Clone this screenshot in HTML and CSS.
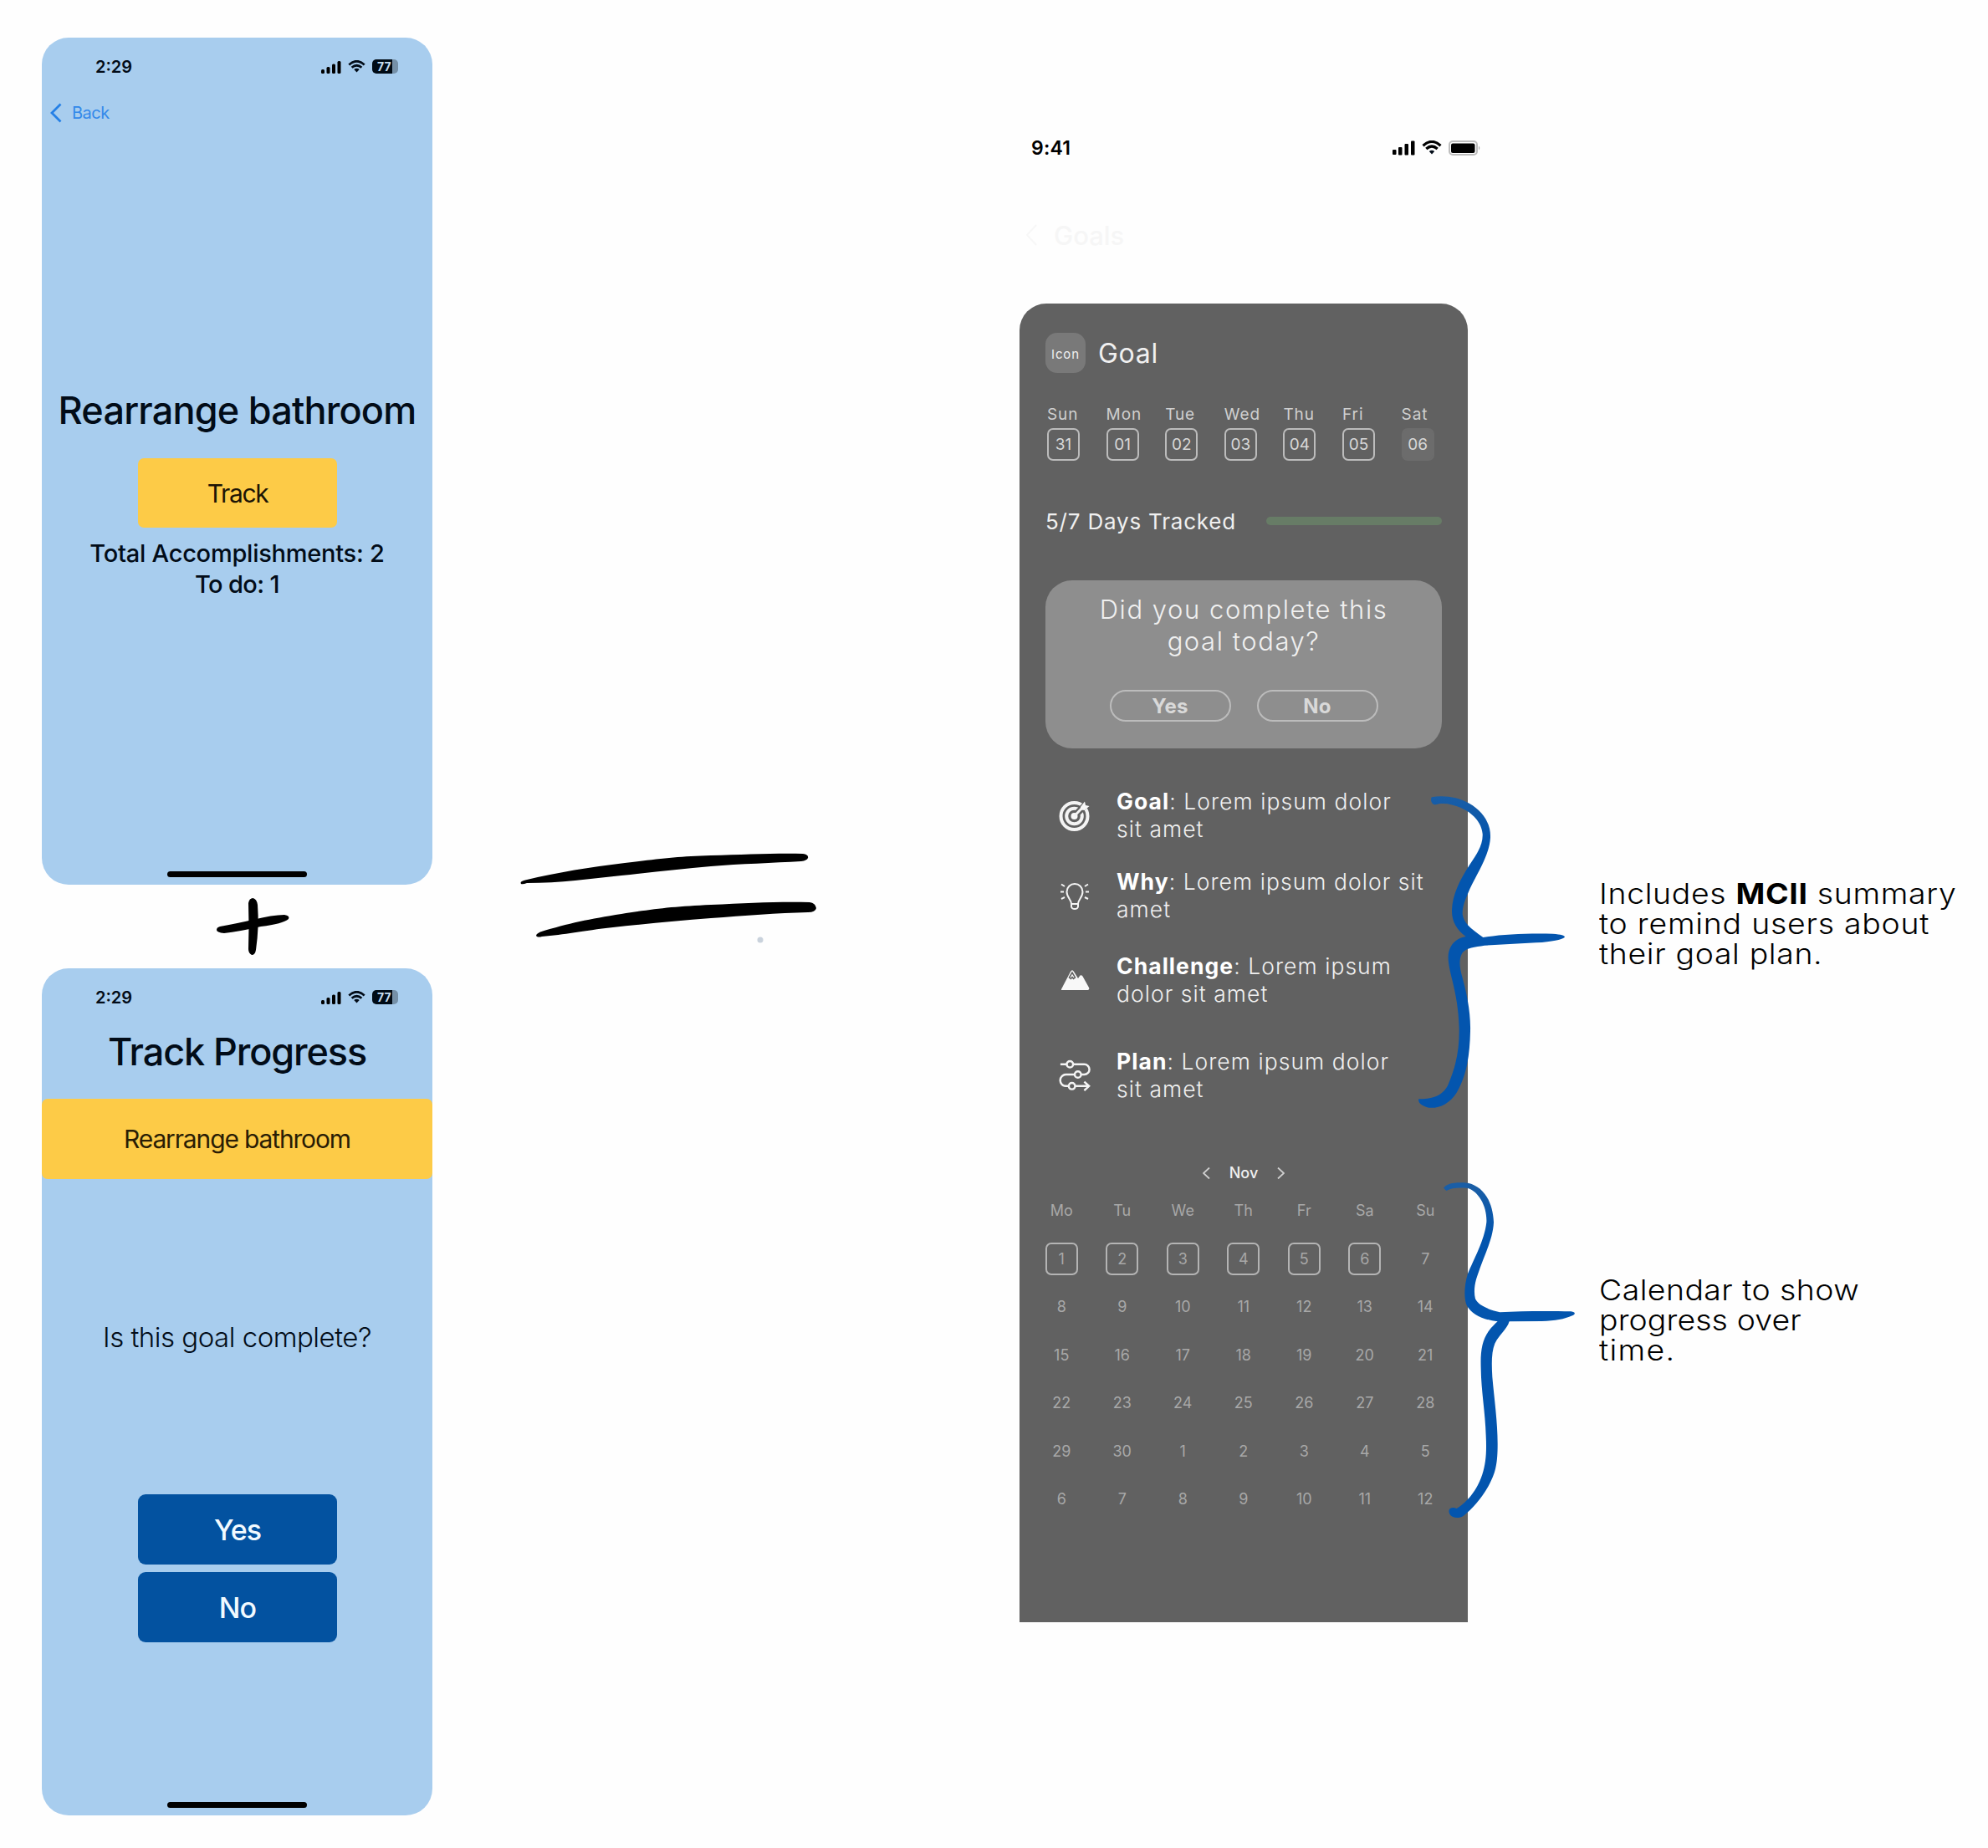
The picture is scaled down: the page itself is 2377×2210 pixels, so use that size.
FILE: index.html
```html
<!DOCTYPE html>
<html lang="en">
<head>
  <meta charset="UTF-8" />
  <meta name="viewport" content="width=device-width, initial-scale=1.0" />
  <title>Goal Tracking</title>
  <link rel="stylesheet" href="styles.css">
</head>
<body>

  <div class="phones">
    <div class="phone">
      <div class="status">
        <span class="time">2:29</span>
        <div class="status-icons">
          <svg class="signal" viewBox="0 0 24 16"><rect x="0" y="11" width="4" height="5" rx="1.5"/><rect x="6.5" y="8" width="4" height="8" rx="1.5"/><rect x="13" y="4.500" width="4" height="11.500" rx="1.5"/><rect x="19.500" y="1" width="4" height="15" rx="1.5"/></svg>
          <svg class="wifi" viewBox="0 0 24 17"><path d="M1.500 6.200Q12-3.400 22.500 6.200M5.300 10Q12 4 18.700 10"/><path class="solid" d="M8.300 12.500Q12 9.600 15.700 12.500L12 16.500Z"/></svg>
          <span class="battery-77"><span>77</span></span>
        </div>
      </div>
      <div class="back">
        <svg viewBox="0 0 14 24"><path d="M12.500 1.500 2 12l10.500 10.500"/></svg>
        <span>Back</span>
      </div>
      <h1 class="title rearrange">Rearrange bathroom</h1>
      <div class="track-btn">Track</div>
      <div class="totals">Total Accomplishments: 2<br><span class="todo">To do: 1</span></div>
      <div class="home-bar"></div>
    </div>

    <svg class="plus" viewBox="0 0 467 100">
      <path d="M247 22Q248 16 252.500 16Q257 17 258 24Q260 50 256 78Q255 84 251 84Q247 82 247 77Q248 50 247 22Z"/>
      <path d="M213 50Q235 46 252 42Q276 36 290 36Q297 37 295 41Q288 47 262 50Q236 56 218 58Q209 57 209 54Q209 51 213 50Z"/>
    </svg>

    <div class="phone">
      <div class="status">
        <span class="time">2:29</span>
        <div class="status-icons">
          <svg class="signal" viewBox="0 0 24 16"><rect x="0" y="11" width="4" height="5" rx="1.5"/><rect x="6.5" y="8" width="4" height="8" rx="1.5"/><rect x="13" y="4.500" width="4" height="11.500" rx="1.5"/><rect x="19.500" y="1" width="4" height="15" rx="1.5"/></svg>
          <svg class="wifi" viewBox="0 0 24 17"><path d="M1.500 6.200Q12-3.400 22.500 6.200M5.300 10Q12 4 18.700 10"/><path class="solid" d="M8.300 12.500Q12 9.600 15.700 12.500L12 16.500Z"/></svg>
          <span class="battery-77"><span>77</span></span>
        </div>
      </div>
      <h1 class="title progress-title">Track Progress</h1>
      <div class="band">Rearrange bathroom</div>
      <div class="question">Is this goal complete?</div>
      <div class="answers">
        <div class="answer">Yes</div>
        <div class="answer">No</div>
      </div>
      <div class="home-bar"></div>
    </div>
  </div>

  <svg class="equals" viewBox="0 0 360 110">
    <path d="M3 42Q1 39 8 37.500C48 28 85 22 127 17S190 9 230 8S310 5 340 6Q347 7 346 11Q345 14 338 15C305 17 265 18 230 21S160 28 123 32S50 41 10 41Q5 43 3 42Z"/>
    <path d="M22 105Q19 103 26 99.500C60 89 85 84 123 78S185 69 230 67S310 63 348 64Q355 65 356 71Q355 76 346 76C310 77 270 80 230 83S150 90 113 94S55 103 28 105Q24 106 22 105Z"/>
    <circle class="dot" cx="289" cy="109" r="3.500"/>
  </svg>

  <div class="mock">
    <div class="mock-status">
      <span class="mock-time">9:41</span>
      <div class="status-icons">
        <svg class="signal big" viewBox="0 0 27 18"><rect x="0" y="11" width="4.500" height="6" rx="1"/><rect x="7" y="8" width="4.500" height="9.500" rx="1"/><rect x="14.500" y="4" width="4.500" height="13.500" rx="1"/><rect x="22" y="0.500" width="4.500" height="17" rx="1"/></svg>
        <svg class="wifi big" viewBox="0 0 24 17"><path d="M1.500 6.200Q12-3.400 22.500 6.200M5.300 10Q12 4 18.700 10"/><path class="solid" d="M8.800 13Q12 10.400 15.200 13L12 16.500Z"/></svg>
        <svg class="battery-full" viewBox="0 0 39 18"><rect class="case" x="1" y="1" width="33" height="16" rx="4"/><rect x="3" y="3.500" width="28.500" height="11.500" rx="2"/><path class="nub" d="M36 6.500Q38.500 9 36 11.500Z"/></svg>
      </div>
    </div>
    <div class="mock-back">
      <svg viewBox="0 0 16 28"><path d="M14 2 3 14l11 12"/></svg>
      <span>Goals</span>
    </div>

    <div class="panel">
      <div class="goal-head">
        <span class="icon-box">Icon</span>
        <span class="goal-name">Goal</span>
      </div>

      <div class="week">
        <div class="day"><span>Sun</span><b>31</b></div>
        <div class="day"><span>Mon</span><b>01</b></div>
        <div class="day"><span>Tue</span><b>02</b></div>
        <div class="day"><span>Wed</span><b>03</b></div>
        <div class="day"><span>Thu</span><b>04</b></div>
        <div class="day"><span>Fri</span><b>05</b></div>
        <div class="day today"><span>Sat</span><b>06</b></div>
      </div>

      <div class="tracked">
        <span>5/7 Days Tracked</span>
        <div class="bar"></div>
      </div>

      <div class="card">
        <p>Did you complete this<br>goal today?</p>
        <div class="card-buttons">
          <span>Yes</span>
          <span>No</span>
        </div>
      </div>

      <div class="summary">
        <div class="item goal">
          <svg viewBox="0 0 38 38"><circle cx="18.500" cy="20" r="16"/><circle cx="18.500" cy="20" r="9.300"/><path class="gap" d="M22 16.500 35 3.500"/><circle class="solid" cx="18.500" cy="20" r="4"/><path class="shaft" d="M18.500 20 29 9"/><path class="solid" d="M26 9 31 2.500 32 7l4.500 1L31 13l-5-.5Z"/></svg>
          <p><strong>Goal</strong>: Lorem ipsum dolor<br>sit amet</p>
        </div>
        <div class="item why">
          <svg viewBox="0 0 38 38"><path class="thin" d="M15 29C15 24 9.500 21 9.500 14.500a9.500 9.500 0 0 1 19 0C28.500 21 23 24 23 29v3a4 3 0 0 1-8 0ZM15 29h8M2 14.500h4M32 14.500h4M3 5.500l4 2.500M35 5.500 31 8M3 23l4-2M35 23l-4-2"/></svg>
          <p><strong>Why</strong>: Lorem ipsum dolor sit<br>amet</p>
        </div>
        <div class="item challenge">
          <svg viewBox="0 0 38 38"><path class="solid" d="M3 30 14 9Q16 5.500 18 9l5 8 2.500-3.500q1.500-1 3 1L36 28q1 2-1 3H4q-1.500 0-1-1Z"/><path class="notch" d="m12.500 16 3.500-6 3.500 6-2 1.500-1.500-2-1.500 2Z"/></svg>
          <p><strong>Challenge</strong>: Lorem ipsum<br>dolor sit amet</p>
        </div>
        <div class="item plan">
          <svg viewBox="0 0 38 40"><path class="mid" d="M1 6h8M17 6h14a6.500 6.500 0 0 1 0 13h-4M19 19H8a7 7 0 0 0 0 14.500h3M20 33.500h16M31 28l6 5.500-6 5.500"/><circle class="mid" cx="13" cy="6" r="4"/><circle class="mid" cx="23" cy="19" r="4"/><circle class="mid" cx="15.500" cy="33.500" r="4"/></svg>
          <p><strong>Plan</strong>: Lorem ipsum dolor<br>sit amet</p>
        </div>
      </div>

      <div class="month">
        <svg viewBox="0 0 9 14"><path d="M8 .5 1 7l7 6.500"/></svg>
        <span>Nov</span>
        <svg viewBox="0 0 9 14"><path d="m1 .5 7 6.500-7 6.500"/></svg>
      </div>
      <div class="weekdays">
        <span>Mo</span><span>Tu</span><span>We</span><span>Th</span><span>Fr</span><span>Sa</span><span>Su</span>
      </div>
      <div class="dates">
        <span class="on">1</span><span class="on">2</span><span class="on">3</span><span class="on">4</span><span class="on">5</span><span class="on">6</span><span>7</span>
        <span>8</span><span>9</span><span>10</span><span>11</span><span>12</span><span>13</span><span>14</span>
        <span>15</span><span>16</span><span>17</span><span>18</span><span>19</span><span>20</span><span>21</span>
        <span>22</span><span>23</span><span>24</span><span>25</span><span>26</span><span>27</span><span>28</span>
        <span>29</span><span>30</span><span>1</span><span>2</span><span>3</span><span>4</span><span>5</span>
        <span>6</span><span>7</span><span>8</span><span>9</span><span>10</span><span>11</span><span>12</span>
      </div>
    </div>

    <!-- hand drawn braces over the panel edge -->
    <svg class="brace brace-summary" viewBox="0 0 750 1290">
      <linearGradient id="ink" x1="0" y1="90" x2="0" y2="260" gradientUnits="userSpaceOnUse"><stop offset="0" stop-color="#1a5ea6"/><stop offset="1" stop-color="#0355ae"/></linearGradient>
      <path d="M125 100C170 92 220 100 260 122C310 150 338 195 336 245C332 310 290 370 262 430C245 470 236 490 236 520C240 550 262 570 310 603C380 592 460 588 560 590C590 592 603 596 603 602C590 612 560 618 500 622L315 632C280 638 250 640 236 658C222 680 225 710 235 745C250 800 266 870 264 940C262 1030 250 1100 215 1160C190 1200 150 1218 115 1214C90 1208 75 1195 79 1183C120 1183 165 1175 185 1130C215 1060 225 1000 224 930C222 860 212 810 200 760C185 700 180 670 190 645C200 620 220 605 248 600C215 575 197 545 198 505C200 450 225 400 260 345C290 300 310 270 308 232C305 190 270 155 230 138C200 125 165 118 140 127C125 127 120 110 125 100Z"/>
    </svg>
    <svg class="brace brace-calendar" viewBox="0 0 750 1290">
      <path d="M168 92C180 75 210 70 255 74C310 85 345 140 348 215C345 280 310 340 285 420C278 445 277 470 282 490C295 515 330 528 370 538C450 533 550 533 625 535C642 537 642 545 630 550C600 563 570 569 520 570L404 571C395 600 370 615 352 650C340 680 340 720 343 770C350 850 362 930 362 1010C362 1080 355 1110 335 1150C310 1200 275 1240 240 1268C225 1278 200 1278 190 1262C180 1240 200 1235 215 1242C250 1222 290 1175 307 1120C320 1080 323 1040 320 980C318 900 303 820 302 740C300 680 305 640 330 605C342 590 352 580 362 571C310 565 270 545 252 515C240 490 242 440 255 400C275 350 315 280 322 215C325 160 295 105 255 93C225 90 195 92 178 102Z"/>
    </svg>
  </div>

  <div class="notes">
    <p><span class="n1">Includes <strong>MCII</strong> summary</span><br><span class="n2">to remind users about</span><br><span class="n3">their goal plan.</span></p>
    <p><span class="n4">Calendar to show</span><br><span class="n5">progress over</span><br><span class="n6">time.</span></p>
  </div>

</body>
</html>
```
FILE: styles.css
```css
* {
  box-sizing: border-box;
}

body {
  margin: 0;
  width: 2377px;
  height: 2210px;
  overflow: hidden;
  background-color: #fefefe;
  color: #000;
  font-family: Inter, "Liberation Sans", sans-serif;
  display: flex;
  align-items: flex-start;
  padding-left: 50px;
}

p, h1 {
  margin: 0;
}

/* phones */

.phones {
  width: 467px;
  margin-top: 45px;
}

.phone {
  height: 1013px;
  background-color: #a8cdee;
  border-radius: 32px;
  color: #020c18;
  display: flex;
  flex-direction: column;
  align-items: center;
}

.status {
  width: 100%;
  height: 69px;
  padding: 0 41px 0 64px;
  display: flex;
  align-items: center;
  justify-content: space-between;
}

.time {
  font-size: 20px;
  font-weight: 600;
}

.status-icons {
  display: flex;
  align-items: center;
  gap: 8px;
}

.signal {
  width: 24px;
  height: 16px;
}

.wifi {
  width: 21px;
  height: 15px;
  fill: none;
  stroke: #020c18;
  stroke-width: 3.2;
}

.wifi .solid {
  fill: #020c18;
  stroke: none;
}

.battery-77 {
  width: 31px;
  height: 17px;
  border-radius: 5px;
  background: linear-gradient(90deg, #000b16 77%, #7590a8 77%);
  color: #c4dcf0;
  font-size: 14px;
  font-weight: 700;
  line-height: 17px;
  padding-left: 6px;
}

.back {
  width: 100%;
  height: 41px;
  padding-left: 10px;
  display: flex;
  align-items: center;
  gap: 12px;
  color: #3389ea;
  font-size: 20px;
  letter-spacing: -0.5px;
}

.back svg {
  width: 14px;
  height: 24px;
  fill: none;
  stroke: #2580e6;
  stroke-width: 2.8;
}

.title {
  font-size: 45px;
  font-weight: 500;
  line-height: 56px;
  white-space: nowrap;
}

.rearrange {
  margin-top: 308px;
  letter-spacing: -0.8px;
}

.track-btn {
  width: 238px;
  height: 83px;
  margin: 29px 0 0 1px;
  border-radius: 7px;
  background-color: #fdcb47;
  color: #1c1405;
  font-size: 30px;
  line-height: 84px;
  text-align: center;
  letter-spacing: -1.4px;
}

.totals {
  margin-top: 12px;
  font-size: 29px;
  font-weight: 500;
  line-height: 37px;
  text-align: center;
  letter-spacing: -0.25px;
}

.todo {
  letter-spacing: -0.6px;
}

.home-bar {
  width: 167px;
  height: 7px;
  margin: auto 0 9px;
  border-radius: 4px;
  background-color: #000;
}

.plus {
  display: block;
  width: 467px;
  height: 100px;
}

.progress-title {
  margin-top: 3px;
  letter-spacing: -1.1px;
}

.band {
  width: 100%;
  height: 96px;
  margin-top: 28px;
  border-radius: 7px;
  background-color: #fdcb47;
  color: #2a1d05;
  font-size: 30px;
  line-height: 96px;
  text-align: center;
  letter-spacing: -1.15px;
}

.question {
  margin-top: 169px;
  font-size: 33px;
  font-weight: 300;
  line-height: 40px;
  letter-spacing: -0.5px;
}

.answers {
  margin: 168px 0 0 1px;
  display: flex;
  flex-direction: column;
  gap: 9px;
}

.answer {
  width: 238px;
  height: 84px;
  border-radius: 9px;
  background-color: #0352a0;
  color: #f2faff;
  font-size: 34px;
  font-weight: 500;
  line-height: 85px;
  text-align: center;
  letter-spacing: -1px;
}

/* equals sign */

.equals {
  width: 360px;
  height: 110px;
  margin: 1015px 0 0 103px;
  overflow: visible;
}

.equals .dot {
  fill: #c9d2dc;
}

/* goal mock */

.mock {
  position: relative;
  width: 552px;
  margin: 156px 0 0 239px;
}

.mock-status {
  height: 41px;
  padding-left: 14px;
  display: flex;
  align-items: center;
  justify-content: space-between;
}

.mock-time {
  font-size: 23px;
  font-weight: 600;
  letter-spacing: 0.2px;
}

.signal.big {
  width: 27px;
  height: 18px;
}

.wifi.big {
  width: 24px;
  height: 17px;
  stroke: #000;
}

.battery-full {
  width: 39px;
  height: 18px;
}

.battery-full .case {
  fill: none;
  stroke: #bdbdbd;
  stroke-width: 2;
}

.battery-full .nub {
  fill: #aaa;
}

.mock-back {
  height: 40px;
  margin: 64px 0 62px;
  padding-left: 6px;
  display: flex;
  align-items: center;
  gap: 19px;
  color: #f6f6f6;
  font-size: 31px;
  font-weight: 500;
}

.mock-back svg {
  width: 16px;
  height: 28px;
  fill: none;
  stroke: #f7f7f7;
  stroke-width: 2;
}

.panel {
  width: 536px;
  height: 1577px;
  padding: 35px 31px 0;
  border-radius: 32px 32px 0 0;
  background-color: #616161;
  color: #f0f0f0;
}

.goal-head {
  display: flex;
  align-items: center;
  gap: 15px;
}

.icon-box {
  width: 48px;
  height: 48px;
  border-radius: 14px;
  background-color: #797979;
  font-size: 15px;
  line-height: 51px;
  text-align: center;
  letter-spacing: 0.9px;
}

.goal-name {
  font-size: 32px;
  letter-spacing: 0.7px;
}

.week {
  display: grid;
  grid-template-columns: repeat(7, 70.6px);
  margin: 40px 0 0 2px;
}

.day span {
  display: block;
  font-size: 19px;
  line-height: 20px;
  letter-spacing: 0.9px;
  color: #cfcfcf;
}

.day b {
  display: block;
  width: 39px;
  height: 39px;
  margin-top: 6px;
  border: 2px solid #bcbcbc;
  border-radius: 7px;
  font-size: 19px;
  font-weight: 400;
  line-height: 36px;
  text-align: center;
  color: #d8d8d8;
}

.day.today b {
  border-color: #6c6c6c;
  background-color: #6c6c6c;
}

.tracked {
  display: flex;
  align-items: center;
  justify-content: space-between;
  margin-top: 57px;
  font-size: 26px;
  line-height: 32px;
  letter-spacing: 0.8px;
}

.bar {
  width: 210px;
  height: 10px;
  margin-bottom: 2px;
  border-radius: 5px;
  background-color: #677c66;
}

.card {
  height: 201px;
  margin-top: 54px;
  padding-top: 16px;
  border-radius: 32px;
  background-color: #8e8e8e;
  font-size: 31px;
  font-weight: 350;
  line-height: 37.5px;
  text-align: center;
  letter-spacing: 1.55px;
}

.card-buttons {
  display: flex;
  justify-content: center;
  gap: 31px;
  margin-top: 40px;
}

.card-buttons span {
  width: 145px;
  height: 38px;
  border: 2px solid #bcbcbc;
  border-radius: 19px;
  color: #d9d9d9;
  font-size: 24px;
  font-weight: 700;
  line-height: 36px;
  letter-spacing: 0.3px;
}

.summary {
  margin-top: 47px;
  font-size: 26.5px;
  font-weight: 350;
  line-height: 33px;
  letter-spacing: 1.05px;
}

.item {
  display: grid;
  grid-template-columns: 69px 1fr;
  align-items: center;
  padding-left: 16px;
  white-space: nowrap;
}

.item strong {
  font-weight: 700;
  color: #fff;
}

.item svg {
  width: 38px;
  height: 38px;
  fill: none;
  stroke: #f4f4f4;
  stroke-width: 4;
}

.item .thin {
  stroke-width: 2;
}

.item .mid {
  stroke-width: 2.6;
}

.item .solid {
  fill: #f8f8f8;
  stroke: none;
}

.item .gap {
  stroke: #616161;
  stroke-width: 8;
}

.item .shaft {
  stroke-width: 3;
}

.item .notch {
  fill: none;
  stroke: #616161;
  stroke-width: 1.5;
}

.why {
  margin-top: 29.5px;
}

.challenge {
  margin-top: 35.5px;
}

.plan {
  margin-top: 47.5px;
}

.month {
  display: flex;
  align-items: center;
  justify-content: center;
  gap: 23px;
  margin-top: 74px;
  font-size: 18px;
  font-weight: 500;
  line-height: 20px;
}

.month svg {
  width: 9px;
  height: 14px;
  fill: none;
  stroke: #d0d0d0;
  stroke-width: 1.8;
}

.weekdays, .dates {
  display: grid;
  grid-template-columns: repeat(7, 72.5px);
  margin-left: -17px;
  color: #a8a8a8;
  font-size: 18px;
  text-align: center;
}

.weekdays {
  margin-top: 25px;
  line-height: 20px;
}

.dates {
  grid-auto-rows: 57.5px;
  align-items: center;
  justify-items: center;
  margin-top: 19px;
}

.dates .on {
  width: 39px;
  height: 39px;
  border: 2px solid #b4b4b4;
  border-radius: 7px;
  line-height: 36px;
}

.brace {
  position: absolute;
  left: 451px;
  width: 250px;
  height: 430px;
  fill: #0355ae;
}

.brace-summary {
  top: 764px;
}

.brace path {
  fill: url(#ink);
}

.brace-calendar {
  top: 1234px;
}

/* annotations */

.notes {
  margin: 1051px 0 0 141px;
  font-size: 34px;
  font-weight: 350;
  line-height: 35.8px;
  white-space: nowrap;
  /* the note lettering is set extra wide */
  transform: scaleX(1.1);
  transform-origin: left top;
}

.notes p + p {
  margin-top: 367px;
}

.notes strong {
  font-weight: 700;
}

.n1 { letter-spacing: 0.6px; }
.n2 { letter-spacing: 0.7px; }
.n3 { letter-spacing: 0.6px; }
.n4 { letter-spacing: 0.4px; }
.n5 { letter-spacing: 0.1px; }
.n6 { letter-spacing: 1.2px; }
```
